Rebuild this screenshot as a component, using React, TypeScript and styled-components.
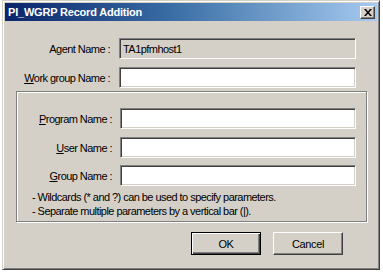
import styled, { createGlobalStyle } from 'styled-components';

const GlobalStyle = createGlobalStyle`
  html, body {
    margin: 0;
    padding: 0;
    background: #ffffff;
  }
  body {
    font-family: "Liberation Sans", Arial, sans-serif;
    font-size: 11px;
    letter-spacing: -0.55px;
    color: #000;
  }
`;

const Page = styled.div`
  padding: 0 0 0 2px;
`;

const Window = styled.div`
  width: 378px;
  height: 270px;
  box-sizing: border-box;
  background: #d4d0c8;
  border: 1px solid;
  border-color: #d4d0c8 #404040 #404040 #d4d0c8;
  box-shadow: inset 1px 1px 0 #ffffff, inset -1px -1px 0 #808080;
  padding: 2px;
  display: flex;
  flex-direction: column;
`;

const TitleBar = styled.div`
  height: 18px;
  display: flex;
  align-items: center;
  justify-content: space-between;
  padding: 0 2px 0 3px;
  background: linear-gradient(to right, #0a246a 0%, #3a6ea5 45%, #a6caf0 100%);
`;

const Title = styled.span`
  color: #ffffff;
  font-weight: bold;
  font-size: 11px;
  letter-spacing: -0.2px;
`;

const CloseButton = styled.div`
  width: 15px;
  height: 13px;
  box-sizing: border-box;
  background: #d4d0c8;
  border: 1px solid;
  border-color: #ffffff #404040 #404040 #ffffff;
  box-shadow: inset -1px -1px 0 #808080;
  display: flex;
  align-items: center;
  justify-content: center;
`;

const Body = styled.div`
  flex: 1;
  display: flex;
  flex-direction: column;
  padding: 17px 9px 11px 11px;
`;

const Row = styled.div<{ $pad: number; $top?: number }>`
  display: grid;
  grid-template-columns: 94px 1fr;
  column-gap: ${p => p.$pad}px;
  align-items: center;
  margin-top: ${p => p.$top ?? 0}px;
`;

const Label = styled.label`
  text-align: right;
  white-space: nowrap;
`;

const Key = styled.span`
  text-decoration: underline;
`;

const Field = styled.div<{ $readOnly?: boolean }>`
  height: 21px;
  box-sizing: border-box;
  background: ${p => (p.$readOnly ? '#d4d0c8' : '#ffffff')};
  border: 1px solid;
  border-color: #808080 #ffffff #ffffff #808080;
  box-shadow: inset 1px 1px 0 #404040, inset -1px -1px 0 #d4d0c8;
  padding: 0 3px;
  display: flex;
  align-items: center;
`;

const Outer = styled.div`
  padding-right: 12px;
`;

const GroupBox = styled.div`
  margin-top: 3px;
  border: 1px solid #808080;
  box-shadow: 1px 1px 0 #ffffff, inset 1px 1px 0 #ffffff;
  padding: 16px 10px 3px 1px;
  margin-right: 1px;
`;

const Notes = styled.div`
  margin-top: 4px;
  padding-left: 14px;
  line-height: 14px;
`;

const ButtonBar = styled.div`
  margin-top: 10px;
  display: flex;
  justify-content: flex-end;
  gap: 12px;
  padding-right: 25px;
`;

const Button = styled.button<{ $default?: boolean }>`
  width: 70px;
  height: 23px;
  box-sizing: border-box;
  font-family: inherit;
  font-size: 11px;
  letter-spacing: -0.4px;
  background: #d4d0c8;
  color: #000;
  padding: 0;
  border: 1px solid;
  border-color: ${p => (p.$default ? '#000000' : '#ffffff #404040 #404040 #ffffff')};
  box-shadow: ${p =>
    p.$default
      ? 'inset 1px 1px 0 #ffffff, inset -1px -1px 0 #404040, inset -2px -2px 0 #808080'
      : 'inset -1px -1px 0 #808080'};
`;

export default function App() {
  return (
    <Page>
      <GlobalStyle />
      <Window>
        <TitleBar>
          <Title>PI_WGRP Record Addition</Title>
          <CloseButton>
            <svg width="8" height="7" viewBox="0 0 8 7">
              <path d="M0 0 L2 0 L4 2.5 L6 0 L8 0 L5 3.5 L8 7 L6 7 L4 4.5 L2 7 L0 7 L3 3.5 Z" fill="#000" />
            </svg>
          </CloseButton>
        </TitleBar>
        <Body>
          <Outer>
            <Row $pad={9}>
              <Label>Agent Name :</Label>
              <Field $readOnly>TA1pfmhost1</Field>
            </Row>
            <Row $pad={9} $top={8}>
              <Label>
                <Key>W</Key>ork group Name :
              </Label>
              <Field />
            </Row>
          </Outer>
          <GroupBox>
            <Row $pad={8}>
              <Label>
                <Key>P</Key>rogram Name :
              </Label>
              <Field />
            </Row>
            <Row $pad={8} $top={8}>
              <Label>
                <Key>U</Key>ser Name :
              </Label>
              <Field />
            </Row>
            <Row $pad={8} $top={7}>
              <Label>
                <Key>G</Key>roup Name :
              </Label>
              <Field />
            </Row>
            <Notes>
              <div>- Wildcards (* and ?) can be used to specify parameters.</div>
              <div>- Separate multiple parameters by a vertical bar (|).</div>
            </Notes>
          </GroupBox>
          <ButtonBar>
            <Button $default>OK</Button>
            <Button>Cancel</Button>
          </ButtonBar>
        </Body>
      </Window>
    </Page>
  );
}
